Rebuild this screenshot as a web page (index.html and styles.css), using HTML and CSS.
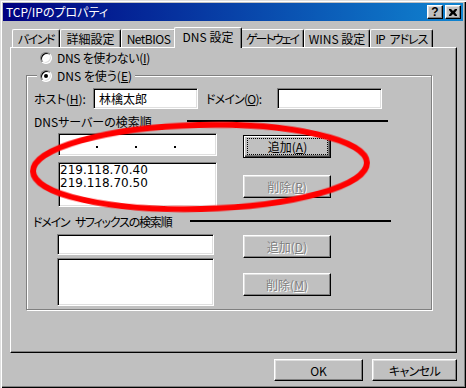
FILE: index.html
```html
<!DOCTYPE html>
<html lang="ja">

<head>
    <meta charset="UTF-8">
    <title>TCP/IPのプロパティ</title>
    <link rel="stylesheet" href="styles.css">
</head>

<body>

    <div class="window">
        <div class="titlebar">
            <span class="title">TCP/IPのプロパティ</span>
            <div class="title-buttons">
                <span class="tbtn help">?</span>
                <span class="tbtn">
                    <svg width="8" height="7" viewBox="0 0 8 7">
                        <path d="M0 0h2l2 2 2-2h2v1l-2 2.5 2 2.5v1h-2l-2-2-2 2h-2v-1l2-2.5-2-2.5z" fill="#000" />
                    </svg>
                </span>
            </div>
        </div>

        <div class="tabs">
            <div class="tab w-bind">バインド</div>
            <div class="tab w-adv">詳細設定</div>
            <div class="tab w-netbios">NetBIOS</div>
            <div class="tab w-dns active">DNS 設定</div>
            <div class="tab w-gw">ゲートウェイ</div>
            <div class="tab w-wins">WINS 設定</div>
            <div class="tab w-ip">IP アドレス</div>
        </div>

        <div class="panel">
            <div class="radio-row">
                <span class="radio"></span>
                <span>DNS を使わない(<u>I</u>)</span>
            </div>

            <div class="group">
                <div class="legend">
                    <span class="radio checked"></span>
                    <span>DNS を使う(<u>E</u>)</span>
                </div>

                <div class="host-row">
                    <span class="label host-label">ホスト(<u>H</u>):</span>
                    <div class="field host-field">林檎太郎</div>
                    <span class="label domain-label">ドメイン(<u>O</u>):</span>
                    <div class="field host-field"></div>
                </div>

                <div class="section-head">
                    <span>DNSサーバーの検索順</span>
                    <span class="rule"></span>
                </div>

                <div class="list-row dns-row">
                    <div class="fields dns-fields">
                        <div class="field ip-field">
                            <span class="dot"></span><span class="dot"></span><span class="dot"></span>
                        </div>
                        <div class="field listbox dns-list">
                            <div>219.118.70.40</div>
                            <div>219.118.70.50</div>
                        </div>
                    </div>
                    <div class="side dns-side">
                        <button class="btn default first"><span class="focus">追加(<u>A</u>)</span></button>
                        <button class="btn disabled second">削除(<u>R</u>)</button>
                    </div>
                </div>

                <div class="section-head suffix-head">
                    <span>ドメイン サフィックスの検索順</span>
                    <span class="rule"></span>
                </div>

                <div class="list-row suffix-row">
                    <div class="fields suffix-fields">
                        <div class="field suffix-field"></div>
                        <div class="field listbox suffix-list"></div>
                    </div>
                    <div class="side suffix-side">
                        <button class="btn disabled first">追加(<u>D</u>)</button>
                        <button class="btn disabled second">削除(<u>M</u>)</button>
                    </div>
                </div>
            </div>
        </div>

        <div class="footer">
            <button class="btn ok">OK</button>
            <button class="btn cancel">キャンセル</button>
        </div>

        <!-- red marker drawn over the screenshot -->
        <svg class="mark" width="466" height="388" viewBox="0 0 466 388">
            <defs>
                <filter id="soft"><feGaussianBlur stdDeviation="0.6" /></filter>
            </defs>
            <ellipse cx="200" cy="167" rx="167" ry="42" transform="rotate(-1.5 200 167)" fill="none" stroke="#ff0000"
                stroke-width="6" filter="url(#soft)" />
        </svg>
    </div>

</body>

</html>
```

FILE: styles.css
```css
* {
    box-sizing: border-box;
}

body {
    margin: 0;
    background: #c0c0c0;
    font-family: "Noto Sans CJK JP", sans-serif;
    font-size: 12px;
    font-feature-settings: "palt";
    color: #000;
}

u {
    text-underline-offset: 1px;
}

.window {
    position: relative;
    width: 466px;
    height: 388px;
    padding: 3px;
    background: #c0c0c0;
    box-shadow: inset 1px 1px 0 #dfdfdf, inset 2px 2px 0 #fff, inset -1px -1px 0 #000, inset -2px -2px 0 #808080;
}

/* title bar */

.titlebar {
    display: flex;
    align-items: center;
    height: 18px;
    padding: 0 2px;
    background: linear-gradient(to right, #000080, #1084d0);
    color: #fff;
}

.title {
    flex: 1;
    padding-left: 1px;
    line-height: 18px;
}

.title-buttons {
    display: flex;
    gap: 2px;
}

.tbtn {
    display: flex;
    align-items: center;
    justify-content: center;
    width: 16px;
    height: 14px;
    background: #c0c0c0;
    border: 1px solid;
    border-color: #fff #000 #000 #fff;
    box-shadow: inset -1px -1px 0 #808080, inset 1px 1px 0 #dfdfdf;
    color: #000;
}

.help {
    font-family: "Liberation Sans", sans-serif;
    font-weight: bold;
    font-size: 12px;
    line-height: 12px;
}

/* tabs */

.tabs {
    display: flex;
    align-items: flex-end;
    height: 20px;
    margin: 6px 0 0 9px;
}

.tab {
    display: flex;
    align-items: center;
    justify-content: center;
    height: 18px;
    border-top: 1px solid #fff;
    border-left: 1px solid #fff;
    border-right: 1px solid #000;
    border-radius: 2px 2px 0 0;
    box-shadow: inset -1px 0 0 #808080;
    background: #c0c0c0;
    white-space: pre;
}

.w-bind { width: 48px; letter-spacing: -1.5px; }
.w-adv { width: 61px; }
.w-netbios { width: 55px; letter-spacing: -0.5px; }
.w-dns { width: 64px; }
.w-gw { width: 64px; letter-spacing: -2px; }
.w-wins { width: 66px; }
.w-ip { width: 63px; letter-spacing: -1px; word-spacing: 3px; }

.tab.active {
    position: relative;
    z-index: 1;
    width: 68px;
    height: 21px;
    margin: 0 -2px -1px;
    padding-bottom: 3px;
}

/* tab page */

.panel {
    width: 447px;
    height: 306px;
    margin-left: 7px;
    padding: 3px 0 0 15px;
    border: 1px solid #000;
    border-top-color: #fff;
    border-left-color: #fff;
    box-shadow: inset -1px -1px 0 #808080;
}

.radio-row {
    display: flex;
    align-items: center;
    gap: 5px;
    height: 13px;
    margin-left: 14px;
    letter-spacing: -0.3px;
}

.radio {
    display: flex;
    align-items: center;
    justify-content: center;
    width: 12px;
    height: 12px;
    border-radius: 50%;
    background: #fff;
    border: 1px solid;
    border-color: #808080 #fff #fff #808080;
    box-shadow: inset 1px 1px 0 #000, inset -1px -1px 0 #dfdfdf;
}

.radio.checked::after {
    content: "";
    width: 4px;
    height: 4px;
    border-radius: 50%;
    background: #000;
}

.group {
    position: relative;
    width: 406px;
    height: 235px;
    margin-top: 11px;
    padding-top: 12px;
    border: 1px solid #808080;
    box-shadow: 1px 1px 0 #fff, inset 1px 1px 0 #fff;
}

.legend {
    position: absolute;
    left: 10px;
    top: -7px;
    display: flex;
    align-items: center;
    gap: 5px;
    height: 13px;
    padding: 0 3px;
    background: #c0c0c0;
}

.host-row {
    display: flex;
    align-items: center;
    height: 21px;
    margin-left: 7px;
}

.host-label { width: 59px; }

.domain-label {
    width: 71px;
    margin-left: 8px;
    letter-spacing: -0.8px;
}

.field {
    background: #fff;
    border: 1px solid;
    border-color: #808080 #fff #fff #808080;
    box-shadow: inset 1px 1px 0 #000, inset -1px -1px 0 #dfdfdf;
}

.host-field {
    width: 105px;
    height: 21px;
    padding-left: 5px;
    line-height: 19px;
}

.section-head {
    display: flex;
    align-items: center;
    height: 14px;
    line-height: 14px;
    margin: 6px 43px 0 7px;
}

.suffix-head {
    margin: 8px 40px 0 6px;
    letter-spacing: -1.2px;
    word-spacing: 4px;
}

.rule {
    width: 201px;
    height: 2px;
    margin: 0 0 2px auto;
    background: #000;
}

.list-row {
    display: flex;
}

.dns-row { margin: 4px 0 0 31px; }
.suffix-row { margin: 5px 0 0 30px; }

.dns-fields { width: 159px; }
.suffix-fields { width: 157px; }

.ip-field {
    display: flex;
    align-items: flex-end;
    gap: 37px;
    height: 23px;
    padding: 0 0 7px 37px;
}

.dot {
    width: 2px;
    height: 2px;
    background: #000;
}

.listbox {
    padding: 1px 0 0 1px;
    font-family: "DejaVu Sans", sans-serif;
    font-size: 12px;
    line-height: 13px;
}

.dns-list {
    height: 45px;
    margin-top: 6px;
}

.suffix-field { height: 21px; }

.suffix-list {
    height: 48px;
    margin-top: 3px;
}

.side {
    display: flex;
    flex-direction: column;
}

.dns-side { margin-left: 26px; }
.suffix-side { margin-left: 29px; }

.dns-side .first { margin-top: 2px; }
.dns-side .second { margin-top: 17px; }
.suffix-side .first { margin-top: 1px; }
.suffix-side .second { margin-top: 15px; }

/* push buttons */

.btn {
    display: flex;
    align-items: center;
    justify-content: center;
    width: 88px;
    height: 23px;
    padding: 0;
    font: inherit;
    color: #000;
    background: #c0c0c0;
    border: 1px solid;
    border-color: #fff #000 #000 #fff;
    box-shadow: inset -1px -1px 0 #808080, inset 1px 1px 0 #dfdfdf;
}

.btn.default {
    border-color: #000;
    box-shadow: inset 1px 1px 0 #fff, inset -1px -1px 0 #404040, inset -2px -2px 0 #808080;
}

.focus {
    display: flex;
    align-items: center;
    justify-content: center;
    align-self: stretch;
    flex: 1;
    margin: 2px 2px 2px 3px;
    border: 1px dotted #000;
}

.btn.disabled {
    color: #808080;
    text-shadow: 1px 1px 0 #fff;
}

.footer {
    display: flex;
    justify-content: flex-end;
    gap: 9px;
    margin-top: 6px;
    padding-right: 6px;
}

.ok {
    width: 89px;
    height: 22px;
}

.cancel {
    width: 85px;
    height: 22px;
    letter-spacing: -0.6px;
}

.mark {
    position: absolute;
    left: 0;
    top: 0;
    pointer-events: none;
}
```
